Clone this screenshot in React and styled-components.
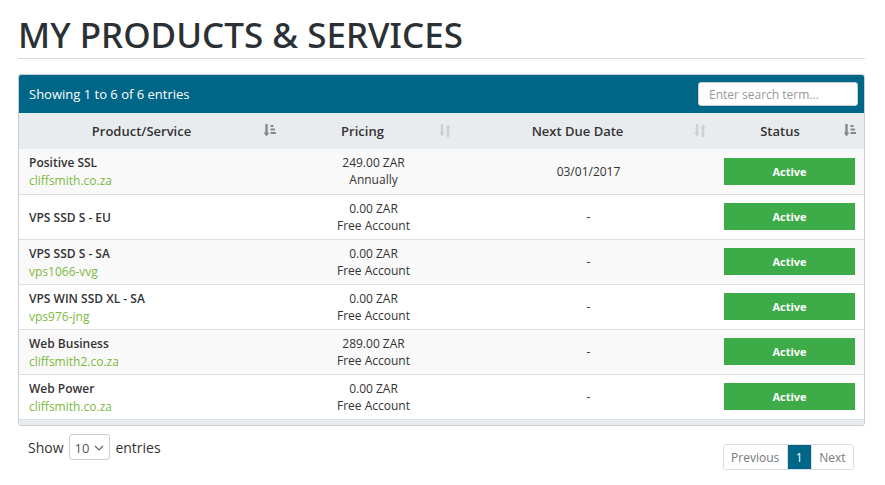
import React from 'react'
import styled, { createGlobalStyle } from 'styled-components'

const GlobalStyle = createGlobalStyle`
  * { box-sizing: border-box; }
  body {
    margin: 0;
    background: #fff;
    font-family: "Open Sans", "Noto Sans", sans-serif;
    color: #333;
  }
`

const rows = [
  { name: 'Positive SSL', domain: 'cliffsmith.co.za', price: '249.00 ZAR', cycle: 'Annually', due: '03/01/2017' },
  { name: 'VPS SSD S - EU', domain: '', price: '0.00 ZAR', cycle: 'Free Account', due: '-' },
  { name: 'VPS SSD S - SA', domain: 'vps1066-vvg', price: '0.00 ZAR', cycle: 'Free Account', due: '-' },
  { name: 'VPS WIN SSD XL - SA', domain: 'vps976-jng', price: '0.00 ZAR', cycle: 'Free Account', due: '-' },
  { name: 'Web Business', domain: 'cliffsmith2.co.za', price: '289.00 ZAR', cycle: 'Free Account', due: '-' },
  { name: 'Web Power', domain: 'cliffsmith.co.za', price: '0.00 ZAR', cycle: 'Free Account', due: '-' },
]

// arrow down with stacked bars (sorted column)
const SortAmount = () => (
  <svg width="12" height="13" viewBox="0 0 12 13">
    <path d="M1.3 0h2.4v8.5h1.6L2.5 12.5-0.3 8.5h1.6z" fill="currentColor" />
    <rect x="6.5" y="1" width="3" height="2" fill="currentColor" />
    <rect x="6.5" y="4.5" width="4.5" height="2" fill="currentColor" />
    <rect x="6.5" y="8" width="5.5" height="2" fill="currentColor" />
  </svg>
)

// up/down pair (unsorted column)
const SortBoth = () => (
  <svg width="12" height="13" viewBox="0 0 12 13">
    <path d="M1.8 0h2.4v8.5h1.6L3 12.5 0.2 8.5h1.6z" fill="currentColor" />
    <path d="M7.8 13h2.4V4.5h1.6L9 0.5 6.2 4.5h1.6z" fill="currentColor" />
  </svg>
)

const columns = [
  { label: 'Product/Service', width: 267, icon: 'amount' },
  { label: 'Pricing', width: 175, icon: 'both' },
  { label: 'Next Due Date', width: 255, icon: 'both' },
  { label: 'Status', width: 150, icon: 'amount' },
]

export default function App() {
  return (
    <Page>
      <GlobalStyle />
      <Title>MY PRODUCTS &amp; SERVICES</Title>
      <Rule />
      <Panel>
        <PanelHead>
          <span>Showing 1 to 6 of 6 entries</span>
          <Search placeholder="Enter search term..." />
        </PanelHead>
        <Table>
          <colgroup>
            {columns.map(c => <col key={c.label} style={{ width: c.width }} />)}
          </colgroup>
          <thead>
            <tr>
              {columns.map(c => (
                <Th key={c.label}>
                  {c.label}
                  <SortIcon $light={c.icon === 'both'}>
                    {c.icon === 'both' ? <SortBoth /> : <SortAmount />}
                  </SortIcon>
                </Th>
              ))}
            </tr>
          </thead>
          <tbody>
            {rows.map((r, i) => (
              <Row key={i} $striped={i % 2 === 0}>
                <NameCell>
                  <strong>{r.name}</strong>
                  {r.domain && <Domain>{r.domain}</Domain>}
                </NameCell>
                <CenterCell>{r.price}<br />{r.cycle}</CenterCell>
                <CenterCell>{r.due}</CenterCell>
                <StatusCell><StatusLabel>Active</StatusLabel></StatusCell>
              </Row>
            ))}
          </tbody>
        </Table>
        <PanelFoot />
      </Panel>
      <Footer>
        <Length>
          Show
          <Select>10 <Chevron viewBox="0 0 10 6"><path d="M1 1l4 4 4-4" /></Chevron></Select>
          entries
        </Length>
        <Pager>
          <PageBtn>Previous</PageBtn>
          <PageBtn $active>1</PageBtn>
          <PageBtn>Next</PageBtn>
        </Pager>
      </Footer>
    </Page>
  )
}

const Page = styled.div`
  width: 847px;
  margin-left: 18px;
  padding-top: 14px;
`

const Title = styled.h1`
  margin: 0;
  font-family: "Noto Sans", sans-serif;
  font-weight: 500;
  font-size: 35px;
  line-height: 42px;
  letter-spacing: 0;
  color: #2b3035;
`

const Rule = styled.hr`
  margin: 2px 0 15px;
  border: 0;
  border-top: 1px solid #d8d8d8;
`

const Panel = styled.div`
  border: 1px solid #c9ced2;
  border-radius: 3px;
  overflow: hidden;
`

const PanelHead = styled.div`
  height: 38px;
  background: #006687;
  color: #fff;
  font-size: 13px;
  display: flex;
  align-items: center;
  justify-content: space-between;
  padding: 0 6px 0 10px;
`

const Search = styled.input`
  width: 160px;
  height: 24px;
  border: 1px solid #ccc;
  border-radius: 3px;
  padding: 0 10px;
  font-family: "Open Sans", sans-serif;
  font-size: 12px;
  color: #555;
  &::placeholder { color: #999; }
`

const Table = styled.table`
  width: 100%;
  border-collapse: collapse;
  table-layout: fixed;
  font-size: 12px;
`

const Th = styled.th`
  position: relative;
  height: 36px;
  background: #e8ecef;
  font-size: 13px;
  font-weight: 600;
  color: #333;
  padding: 0 30px 0 8px;
  text-align: center;
`

const SortIcon = styled.span`
  position: absolute;
  right: 10px;
  top: 11px;
  display: flex;
  color: ${p => (p.$light ? '#cdd1d4' : '#85888b')};
`

const Row = styled.tr`
  height: 45px;
  background: ${p => (p.$striped ? '#f9f9f9' : '#fff')};
  border-top: 1px solid #ddd;
  &:first-child { border-top: 0; }
`

const NameCell = styled.td`
  padding: 2px 10px 0;
  line-height: 18px;
  color: #333;
  strong { display: block; font-weight: 600; }
`

const Domain = styled.span`
  display: block;
  color: #7dba3e;
`

const CenterCell = styled.td`
  text-align: center;
  padding-top: 1px;
  line-height: 17px;
  color: #333;
`

const StatusCell = styled.td`
  padding: 0 11px 0 8px;
`

const StatusLabel = styled.div`
  height: 27px;
  background: #3cab48;
  color: #fff;
  font-size: 11px;
  font-weight: 700;
  display: flex;
  align-items: center;
  justify-content: center;
`

const PanelFoot = styled.div`
  height: 6px;
  background: #e8ecef;
  border-top: 1px solid #ddd;
`

const Footer = styled.div`
  display: flex;
  justify-content: space-between;
  align-items: flex-start;
  padding: 8px 11px 0 10px;
`

const Length = styled.div`
  display: flex;
  align-items: center;
  gap: 5px;
  font-size: 14px;
  color: #333;
`

const Select = styled.div`
  display: flex;
  align-items: center;
  gap: 5px;
  height: 26px;
  padding: 2px 5px 0 5px;
  border: 1px solid #ccc;
  border-radius: 3px;
  font-size: 13px;
  color: #555;
`

const Chevron = styled.svg`
  width: 10px;
  height: 6px;
  fill: none;
  stroke: #666;
  stroke-width: 1.2;
`

const Pager = styled.div`
  display: flex;
  margin-top: 10px;
  border: 1px solid #ddd;
  border-radius: 3px;
  overflow: hidden;
`

const PageBtn = styled.span`
  height: 24px;
  padding: 0 ${p => (p.$active ? 8 : 7.5)}px;
  display: flex;
  align-items: center;
  font-size: 12px;
  color: ${p => (p.$active ? '#fff' : '#777')};
  background: ${p => (p.$active ? '#006687' : '#fff')};
  & + & { border-left: 1px solid #ddd; }
`
